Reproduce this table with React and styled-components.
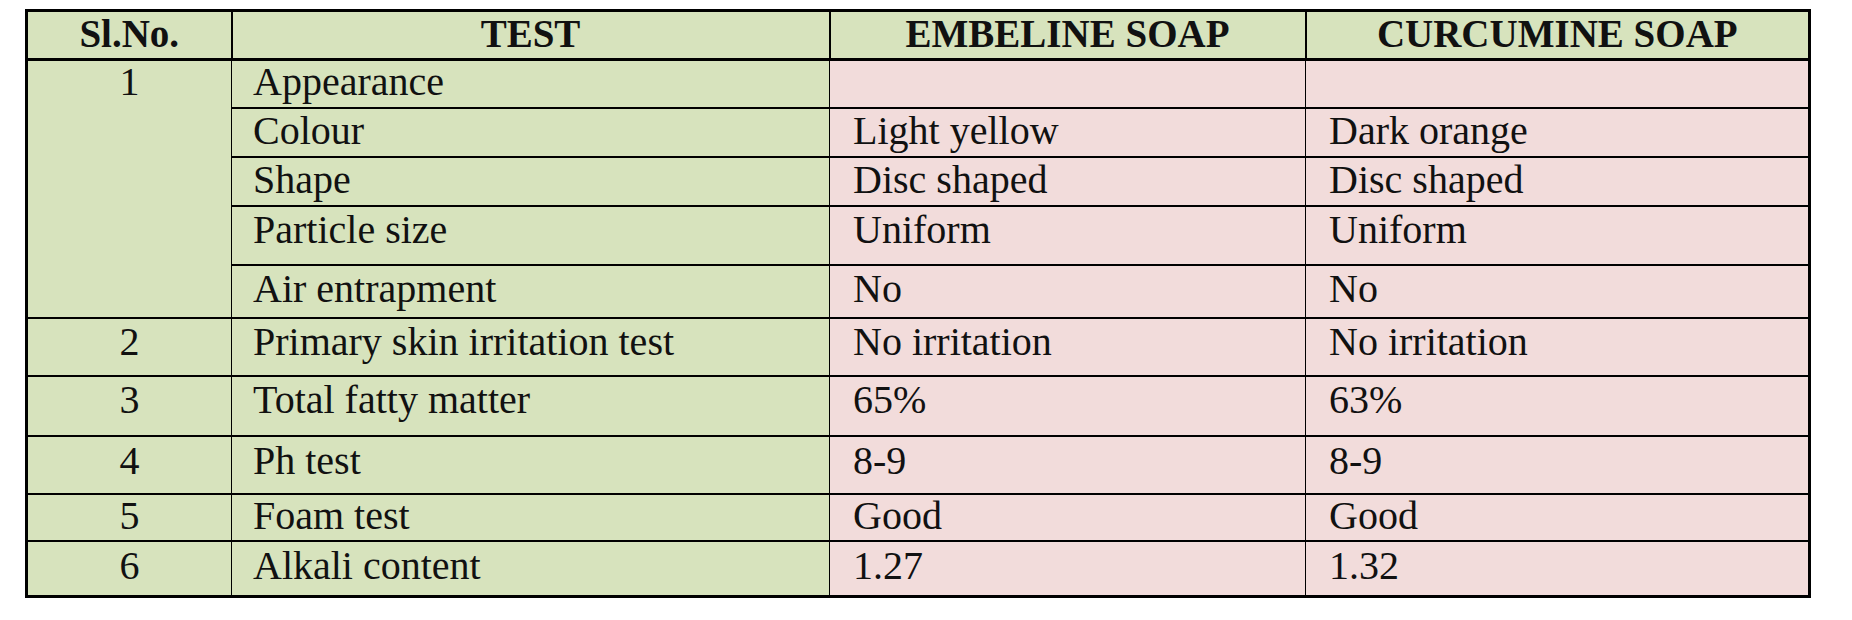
import React from 'react';
import styled, { createGlobalStyle } from 'styled-components';

const GlobalStyle = createGlobalStyle`
  html, body {
    margin: 0;
    padding: 0;
    background: #ffffff;
  }
  body {
    font-family: "Liberation Serif", "Times New Roman", serif;
    color: #111111;
  }
`;

const GREEN = '#d7e3bd';
const PINK = '#f2dcdb';

const Page = styled.div`
  padding: 9px 0 0 25px;
`;

const Table = styled.table`
  width: 1783px;
  border-collapse: collapse;
  table-layout: fixed;
  border: 3px solid #000;
`;

const HeadRow = styled.tr`
  height: 49px;
`;

const HeadCell = styled.th`
  background: ${GREEN};
  border: 2px solid #000;
  border-bottom-width: 3px;
  padding: 0 0 2px;
  font-size: 39px;
  line-height: 40px;
  font-weight: bold;
  text-align: center;
  vertical-align: middle;
  white-space: nowrap;
`;

const Row = styled.tr`
  height: ${(p) => p.$h}px;
`;

const NumCell = styled.td`
  background: ${GREEN};
  border: 2px solid #000;
  border-right-width: 1px;
  padding: ${(p) => p.$top}px 0 0;
  font-size: 40px;
  line-height: 40px;
  text-align: center;
  vertical-align: top;
`;

const TextCell = styled.td`
  background: ${(p) => (p.$tone === 'pink' ? PINK : GREEN)};
  border: 2px solid #000;
  border-left-width: 1px;
  border-right-width: 1px;
  padding: ${(p) => p.$top}px 0 0 ${(p) => p.$pad}px;
  font-size: 40px;
  line-height: 40px;
  text-align: left;
  vertical-align: top;
  white-space: nowrap;
`;

const rows = [
  { no: '1', span: 5, test: 'Appearance', embeline: '', curcumine: '', h: 48, top: 1 },
  { test: 'Colour', embeline: 'Light yellow', curcumine: 'Dark orange', h: 49, top: 2 },
  { test: 'Shape', embeline: 'Disc shaped', curcumine: 'Disc shaped', h: 49, top: 2 },
  { test: 'Particle size', embeline: 'Uniform', curcumine: 'Uniform', h: 59, top: 3 },
  { test: 'Air entrapment', embeline: 'No', curcumine: 'No', h: 53, top: 3 },
  { no: '2', test: 'Primary skin irritation test', embeline: 'No irritation', curcumine: 'No irritation', h: 58, top: 3 },
  { no: '3', test: 'Total fatty matter', embeline: '65%', curcumine: '63%', h: 60, top: 3 },
  { no: '4', test: 'Ph test', embeline: '8-9', curcumine: '8-9', h: 58, top: 4 },
  { no: '5', test: 'Foam test', embeline: 'Good', curcumine: 'Good', h: 47, top: 1 },
  { no: '6', test: 'Alkali content', embeline: '1.27', curcumine: '1.32', h: 56, top: 4 },
];

function App() {
  return (
    <Page>
      <GlobalStyle />
      <Table>
        <colgroup>
          <col style={{ width: 205 }} />
          <col style={{ width: 598 }} />
          <col style={{ width: 476 }} />
          <col style={{ width: 504 }} />
        </colgroup>
        <thead>
          <HeadRow>
            <HeadCell>Sl.No.</HeadCell>
            <HeadCell>TEST</HeadCell>
            <HeadCell>EMBELINE SOAP</HeadCell>
            <HeadCell>CURCUMINE SOAP</HeadCell>
          </HeadRow>
        </thead>
        <tbody>
          {rows.map((row) => (
            <Row key={row.test} $h={row.h}>
              {row.no && (
                <NumCell rowSpan={row.span || 1} $top={row.top}>
                  {row.no}
                </NumCell>
              )}
              <TextCell $pad={21} $top={row.top}>{row.test}</TextCell>
              <TextCell $tone="pink" $pad={23} $top={row.top}>{row.embeline}</TextCell>
              <TextCell $tone="pink" $pad={23} $top={row.top}>{row.curcumine}</TextCell>
            </Row>
          ))}
        </tbody>
      </Table>
    </Page>
  );
}

export default App;
